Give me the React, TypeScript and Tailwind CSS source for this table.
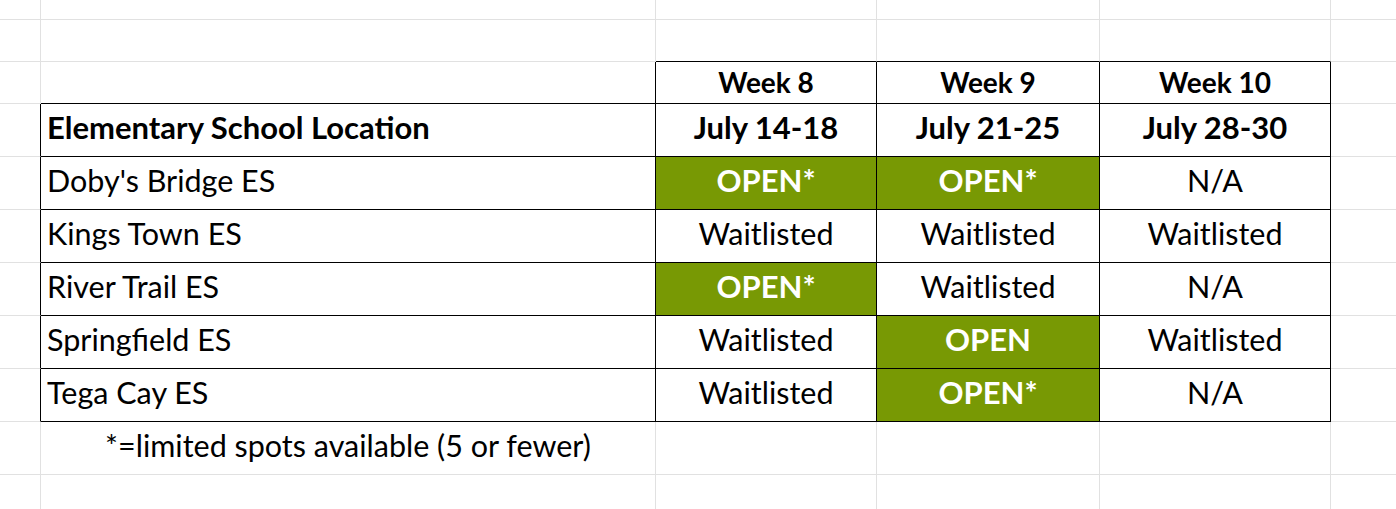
import React from "react";

type Cell = {
  text?: string;
  bold?: boolean;
  small?: boolean;
  green?: boolean;
  align?: "left" | "center";
  rb?: boolean;
  bb?: boolean;
};

const rowHeights = ["h-[20px]", "h-[42px]", "h-[42px]", "h-[53px]", "h-[53px]", "h-[53px]", "h-[53px]", "h-[53px]", "h-[53px]", "h-[53px]", "h-[40px]"];

const empty = (): Cell[] => [{}, {}, {}, {}, {}, {}];

function dataRow(name: string, vals: string[]): Cell[] {
  return [
    { rb: true },
    { text: name, align: "left", rb: true, bb: true },
    ...vals.map((v) => {
      const open = v.startsWith("OPEN");
      return { text: v, bold: open, green: open, align: "center" as const, rb: true, bb: true };
    }),
    {},
  ];
}

const rows: Cell[][] = [
  empty(),
  [{}, {}, { bb: true }, { bb: true }, { bb: true }, {}],
  [
    {},
    { rb: true, bb: true },
    { text: "Week 8", bold: true, small: true, align: "center", rb: true, bb: true },
    { text: "Week 9", bold: true, small: true, align: "center", rb: true, bb: true },
    { text: "Week 10", bold: true, small: true, align: "center", rb: true, bb: true },
    {},
  ],
  [
    { rb: true },
    { text: "Elementary School Location", bold: true, align: "left", rb: true, bb: true },
    { text: "July 14-18", bold: true, align: "center", rb: true, bb: true },
    { text: "July 21-25", bold: true, align: "center", rb: true, bb: true },
    { text: "July 28-30", bold: true, align: "center", rb: true, bb: true },
    {},
  ],
  dataRow("Doby's Bridge ES", ["OPEN*", "OPEN*", "N/A"]),
  dataRow("Kings Town ES", ["Waitlisted", "Waitlisted", "Waitlisted"]),
  dataRow("River Trail ES", ["OPEN*", "Waitlisted", "N/A"]),
  dataRow("Springfield ES", ["Waitlisted", "OPEN", "Waitlisted"]),
  dataRow("Tega Cay ES", ["Waitlisted", "OPEN*", "N/A"]),
  [{}, { text: "*=limited spots available (5 or fewer)", align: "center" }, {}, {}, {}, {}],
  empty(),
];

export default function App() {
  return (
    <div
      className="w-[1396px] h-[509px] overflow-hidden bg-white text-black"
      style={{ fontFamily: "Lato, 'Open Sans', sans-serif" }}
    >
      <div className="grid grid-cols-[41px_615px_221px_223px_231px_1fr]">
        {rows.map((r, ri) =>
          r.map((c, ci) => (
            <div
              key={`${ri}-${ci}`}
              className={[
                rowHeights[ri],
                "box-border border-r border-b flex items-center overflow-visible whitespace-nowrap leading-none",
                c.rb ? "border-r-black" : "border-r-[#e1e1e1]",
                c.bb ? "border-b-black" : "border-b-[#e1e1e1]",
                c.green ? "bg-[#789904] text-white" : "",
                c.small
                  ? "font-bold text-[28px] pb-[1px]"
                  : c.bold
                  ? "font-bold text-[31px] pb-[6px]"
                  : "font-normal text-[30.5px] pb-[6px]",
                c.align === "left" ? "justify-start pl-[6px]" : "justify-center",
                ci === 5 ? "border-r-0" : "",
              ].join(" ")}
            >
              {c.text ?? ""}
            </div>
          ))
        )}
      </div>
    </div>
  );
}
